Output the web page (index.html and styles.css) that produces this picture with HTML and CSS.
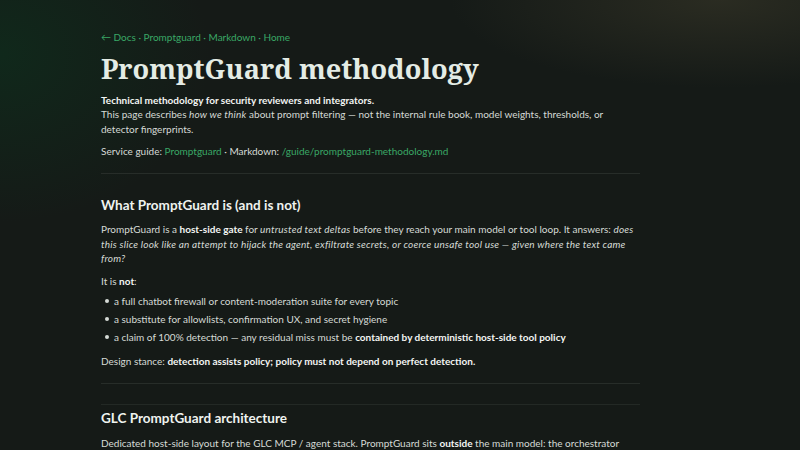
FILE: index.html
```html
<!DOCTYPE html>
<html lang="en">

<head>
  <meta charset="UTF-8">
  <meta name="viewport" content="width=device-width, initial-scale=1.0">
  <title>PromptGuard methodology</title>
  <link rel="stylesheet" href="styles.css">
</head>

<body>
  <main class="page">
    <nav class="crumbs">
      <a href="#">&larr; Docs</a> &middot; <a href="#">Promptguard</a> &middot; <a href="#">Markdown</a> &middot; <a href="#">Home</a>
    </nav>

    <h1 class="title">PromptGuard methodology</h1>

    <p class="lead">
      <strong>Technical methodology for security reviewers and integrators.</strong><br>
      This page describes <em>how we think</em> about prompt filtering &mdash; not the internal rule book, model weights, thresholds, or detector fingerprints.
    </p>
    <p>Service guide: <a href="#">Promptguard</a> &middot; Markdown: <a href="#">/guide/promptguard-methodology.md</a></p>

    <hr class="rule">

    <section class="block first">
      <h2>What PromptGuard is (and is not)</h2>
      <p>PromptGuard is a <strong>host-side gate</strong> for <em>untrusted text deltas</em> before they reach your main model or tool loop. It answers: <em>does this slice look like an attempt to hijack the agent, exfiltrate secrets, or coerce unsafe tool use &mdash; given where the text came from?</em></p>
      <p>It is <strong>not</strong>:</p>
      <ul>
        <li>a full chatbot firewall or content-moderation suite for every topic</li>
        <li>a substitute for allowlists, confirmation UX, and secret hygiene</li>
        <li>a claim of 100% detection &mdash; any residual miss must be <strong>contained by deterministic host-side tool policy</strong></li>
      </ul>
      <p>Design stance: <strong>detection assists policy; policy must not depend on perfect detection.</strong></p>
    </section>

    <hr class="rule end">

    <section class="block arch">
      <h2>GLC PromptGuard architecture</h2>
      <p>Dedicated host-side layout for the GLC MCP / agent stack. PromptGuard sits <strong>outside</strong> the main model: the orchestrator hands each untrusted delta to the gate, reads back a verdict, and only then decides whether the text may enter the model context.</p>
      <p>The gate never holds tool credentials and never executes tools. It classifies; the host enforces.</p>
    </section>

    <hr class="rule">

    <section class="block">
      <h2>Trust zones</h2>
      <p>Every slice carries its origin: operator, user, retrieved document, tool output, or third-party web content. Scoring is always read together with that origin.</p>
      <ul>
        <li>operator text is trusted configuration</li>
        <li>user text is intent, not authority over tools</li>
        <li>retrieved and tool text is data and never instructions</li>
      </ul>
    </section>
  </main>
</body>

</html>
```
FILE: styles.css
```css
/* Base */
html {
  background-color: #141916;
}

body {
  margin: 0;
  font-family: Lato, "Open Sans", sans-serif;
  font-size: 10px;
  line-height: 1.45;
  color: #d5dad6;
  background:
    radial-gradient(ellipse 35% 50% at 0% 12%, rgba(10, 58, 32, 0.45), transparent 75%),
    radial-gradient(ellipse 45% 26% at 90% 0%, rgba(72, 68, 48, 0.42), transparent 75%),
    #151a17;
  background-attachment: fixed;
}

a {
  color: #3aa866;
  text-decoration: none;
}

strong {
  color: #f3f5f3;
  font-weight: 700;
}

em {
  letter-spacing: 0.2px;
}

p {
  margin: 8px 0;
}

/* Page column */
.page {
  width: 539px;
  padding: 30px 0 40px 101px;
}

.crumbs {
  color: #3aa866;
}

.title {
  margin: 8px 0 9px;
  font-family: "Noto Serif", Georgia, serif;
  font-size: 27.2px;
  line-height: 1.15;
  font-weight: 700;
  color: #e4ece5;
}

.lead {
  margin-top: 0;
}

.rule {
  border: 0;
  border-top: 1px solid #272d29;
  margin: 14px 0;
}

.rule.end {
  margin-top: 15px;
}

/* Sections */
.block h2 {
  margin: 0;
  font-size: 13.5px;
  line-height: 1.3;
  font-weight: 700;
  color: #eff3ef;
}

.block.first {
  padding-top: 9px;
}

.block h2 + p {
  margin-top: 8px;
}

.block ul {
  list-style: none;
  margin: -2px 0 9px;
  /* collapses with the 8px above, leaves ~6px */
  padding-left: 12px;
}

.block li {
  margin-bottom: 3.5px;
}

/* bullet dot, a bit heavier than the font's own disc */
.block li::before {
  content: "";
  display: inline-block;
  width: 4px;
  height: 4px;
  border-radius: 50%;
  background: #d5dad6;
  margin: 0 5px 0 -8px;
  vertical-align: 2px;
}

.arch {
  margin-top: 20px;
  padding-top: 5px;
  border-top: 1px solid #232925;
}
```
